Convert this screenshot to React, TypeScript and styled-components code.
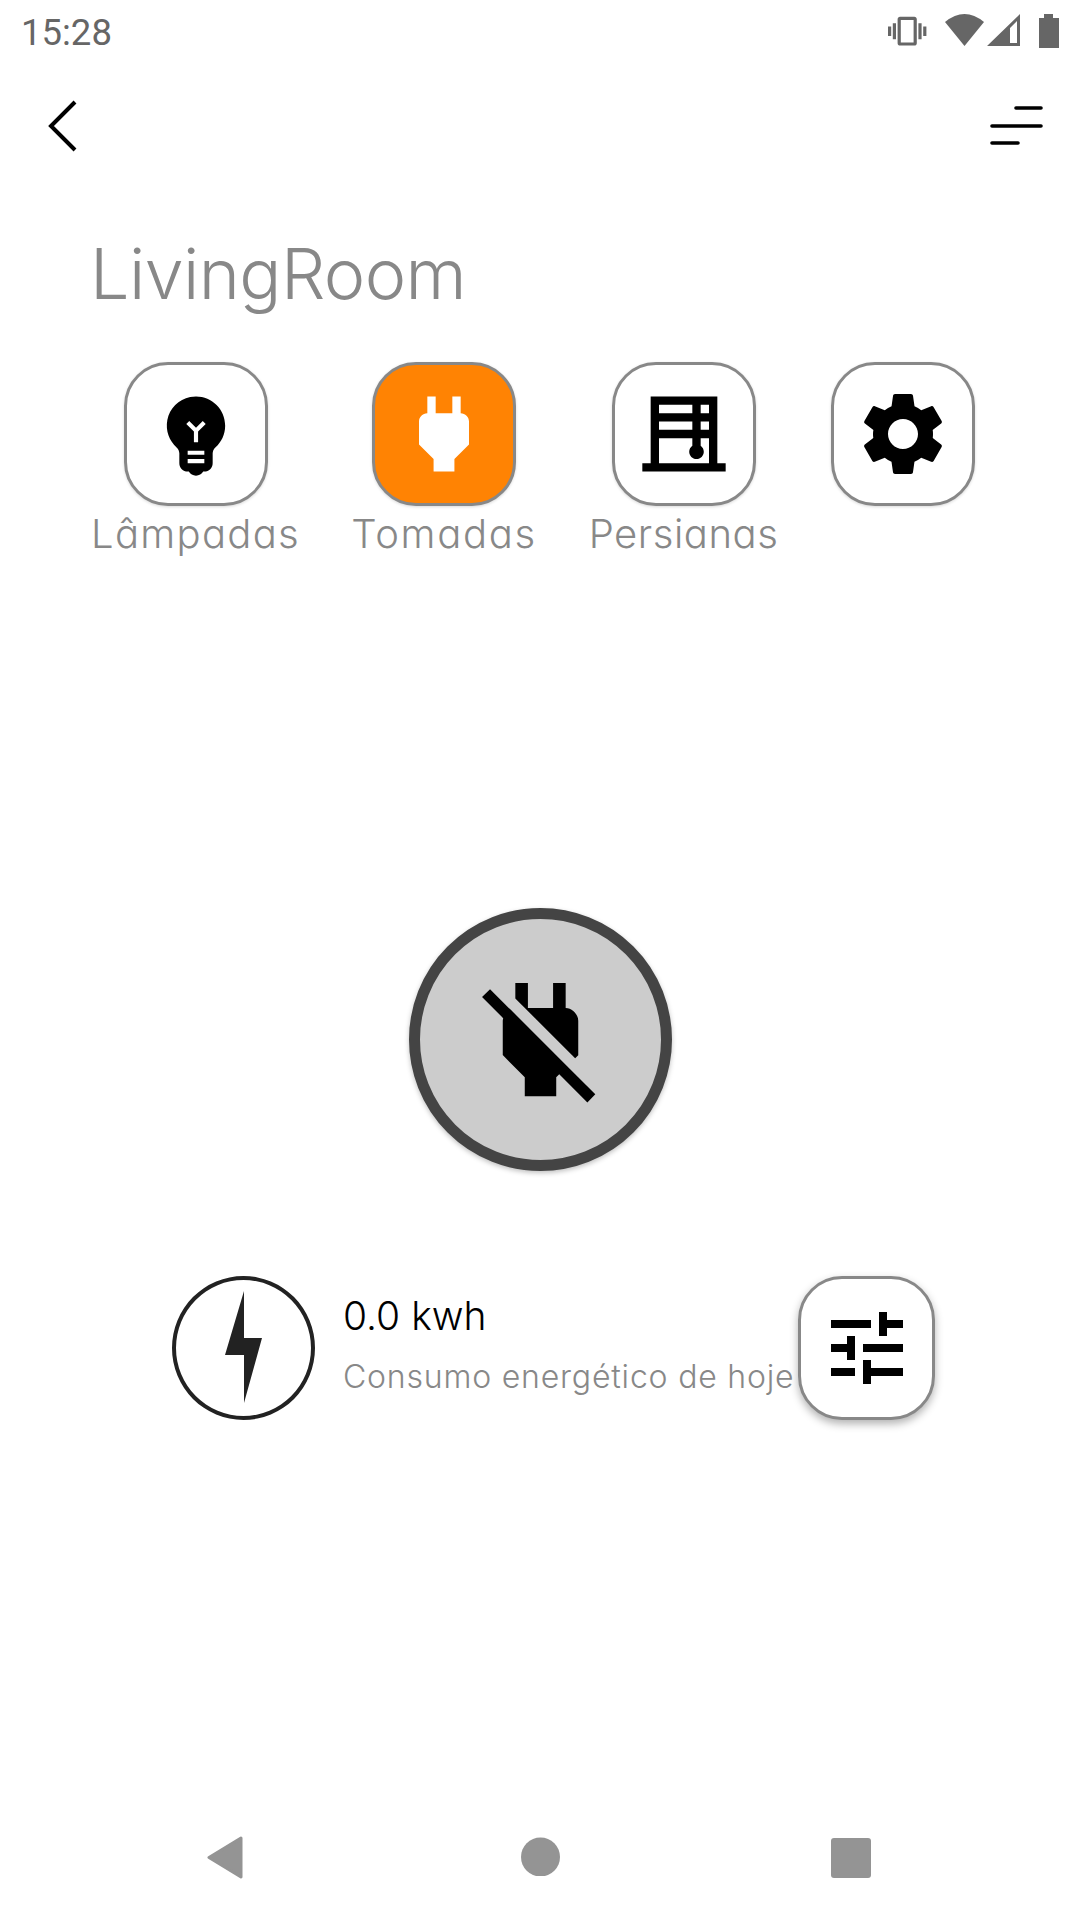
import styled, { createGlobalStyle } from "styled-components";

const GlobalStyle = createGlobalStyle`
  html, body {
    margin: 0;
    padding: 0;
    background: #fff;
  }
`;

const Screen = styled.div`
  width: 1080px;
  height: 1920px;
  display: flex;
  flex-direction: column;
  background: #fff;
  font-family: Inter, "Liberation Sans", sans-serif;
  font-feature-settings: "cv11" 1;
  overflow: hidden;
`;

const StatusBar = styled.div`
  height: 66px;
  padding: 14px 20px 0 21px;
  box-sizing: border-box;
  display: flex;
  justify-content: space-between;
  align-items: flex-start;
`;

const Clock = styled.span`
  font-family: Roboto, sans-serif;
  font-feature-settings: normal;
  font-size: 36.5px;
  line-height: 38px;
  color: #666;
`;

const StatusIcons = styled.div`
  display: flex;
  align-items: flex-start;
  fill: #666;
`;

const Toolbar = styled.div`
  height: 120px;
  padding: 0 36px 0 48px;
  box-sizing: border-box;
  display: flex;
  justify-content: space-between;
  align-items: center;
`;

const Title = styled.h1`
  margin: 43px 0 0 90px;
  font-size: 70px;
  line-height: 90px;
  font-weight: 300;
  letter-spacing: -0.6px;
  color: #888;
`;

const Tabs = styled.div`
  margin: 43px 0 0 93px;
  display: flex;
  gap: 54px;
`;

const Tab = styled.div<{ $width: number }>`
  width: ${(p) => p.$width}px;
  display: flex;
  flex-direction: column;
  align-items: center;
`;

const Tile = styled.div<{ $active?: boolean; $wide?: number; $shadow?: boolean }>`
  width: ${(p) => p.$wide ?? 144}px;
  height: 144px;
  box-sizing: border-box;
  flex: none;
  display: flex;
  align-items: center;
  justify-content: center;
  border: 3px solid #888;
  border-radius: 44px;
  background: ${(p) => (p.$active ? "#ff8303" : "#fff")};
  fill: ${(p) => (p.$active ? "#fff" : "#000")};
  box-shadow: ${(p) =>
    p.$shadow ? "0 4px 8px rgba(0,0,0,0.3)" : "0 1px 3px rgba(0,0,0,0.15)"};
`;

const TabLabel = styled.span<{ $tracking: number }>`
  margin-top: 3px;
  font-size: 40px;
  line-height: 50px;
  font-weight: 300;
  letter-spacing: ${(p) => p.$tracking}px;
  white-space: nowrap;
  color: #888;
`;

const PowerButton = styled.div`
  width: 263px;
  height: 263px;
  margin: 349px 0 0 409px;
  box-sizing: border-box;
  display: flex;
  align-items: center;
  justify-content: center;
  border: 11px solid #444;
  border-radius: 50%;
  background: #ccc;
  box-shadow: 0 2px 5px rgba(0,0,0,0.25);
`;

const Consumption = styled.div`
  margin: 105px 0 0 172px;
  width: 763px;
  display: flex;
  align-items: center;
`;

const BoltBadge = styled.div`
  width: 143px;
  height: 144px;
  flex: none;
  margin-right: 28px;
  padding-bottom: 3px;
  box-sizing: border-box;
  display: flex;
  align-items: center;
  justify-content: center;
  border: 4px solid #222;
  border-radius: 50%;
`;

const Reading = styled.div`
  width: 455px;
  flex: none;
  padding-bottom: 9px;
  display: flex;
  flex-direction: column;
`;

const Value = styled.span`
  font-size: 39px;
  line-height: 50px;
  font-weight: 300;
  color: #000;
`;

const Caption = styled.span`
  margin-top: 16px;
  font-size: 32px;
  line-height: 40px;
  font-weight: 300;
  letter-spacing: 0.8px;
  white-space: nowrap;
  color: #888;
`;

const NavBar = styled.div`
  margin-top: auto;
  height: 84px;
  padding-left: 206px;
  display: flex;
  align-items: flex-start;
  fill: #949494;
`;

const NavSlot = styled.div<{ $after: number }>`
  display: flex;
  margin-right: ${(p) => p.$after}px;
`;

const MdIcon = ({ d, size }: { d: string; size: number }) => (
  <svg width={size} height={size} viewBox="0 0 24 24">
    <path d={d} />
  </svg>
);

const bulb =
  "M12,3c-0.46,0-0.93,0.04-1.4,0.14C7.84,3.67,5.64,5.9,5.12,8.66c-0.48,2.61,0.48,5.01,2.22,6.56C7.77,15.6,8,16.13,8,16.69V19c0,1.1,0.9,2,2,2h0.28c0.35,0.6,0.98,1,1.72,1s1.38-0.4,1.72-1H14c1.1,0,2-0.9,2-2v-2.31c0-0.55,0.22-1.09,0.64-1.46C18.09,13.95,19,12.08,19,10C19,6.13,15.87,3,12,3z M14,19h-4v-1h4V19z M14,17h-4v-1h4V17z M12.5,11.41V14h-1v-2.59L9.67,9.59l0.71-0.71L12,10.5l1.62-1.62l0.71,0.71L12.5,11.41z";
const plug =
  "M16 7V3h-2v4h-4V3H8v4h-.01C6.9 6.99 6 7.89 6 8.98v5.52L9.5 18v3h5v-3l3.5-3.5V9c0-1.1-.9-2-2-2z";
const plugOff =
  "M18 14.49V9c0-1-1.01-2.01-2-2V3h-2v4h-4V3H8v2.48l9.51 9.5.49-.49zm-1.76 1.77L7.2 7.2l-.01.01L3.98 4 2.71 5.25l3.36 3.36C6.04 8.74 6 8.87 6 9v5.48L9.5 18v3h5v-3l.48-.48L19.45 22l1.26-1.28-4.47-4.46z";
const blinds =
  "M20,19V3H4v16H2v2h20v-2H20z M16,9h2v2h-2V9z M14,11H6V9h8V11z M18,7h-2V5h2V7z M14,5v2H6V5H14z M6,19v-6h8v1.82c-0.45,0.32-0.75,0.84-0.75,1.43c0,0.97,0.78,1.75,1.75,1.75s1.75-0.78,1.75-1.75c0-0.59-0.3-1.12-0.75-1.43V13h2v6H6z";
const gear =
  "M19.14,12.94c0.04-0.3,0.06-0.61,0.06-0.94c0-0.32-0.02-0.64-0.07-0.94l2.03-1.58c0.18-0.14,0.23-0.41,0.12-0.61l-1.92-3.32c-0.12-0.22-0.37-0.29-0.59-0.22l-2.39,0.96c-0.5-0.38-1.03-0.7-1.62-0.94L14.4,2.81c-0.04-0.24-0.24-0.41-0.48-0.41h-3.84c-0.24,0-0.43,0.17-0.47,0.41L9.25,5.35C8.66,5.59,8.12,5.92,7.63,6.29L5.24,5.33c-0.22-0.08-0.47,0-0.59,0.22L2.74,8.87C2.62,9.08,2.66,9.34,2.86,9.48l2.03,1.58C4.84,11.36,4.8,11.69,4.8,12s0.02,0.64,0.07,0.94l-2.03,1.58c-0.18,0.14-0.23,0.41-0.12,0.61l1.92,3.32c0.12,0.22,0.37,0.29,0.59,0.22l2.39-0.96c0.5,0.38,1.03,0.7,1.62,0.94l0.36,2.54c0.05,0.24,0.24,0.41,0.48,0.41h3.84c0.24,0,0.44-0.17,0.47-0.41l0.36-2.54c0.59-0.24,1.13-0.56,1.62-0.94l2.39,0.96c0.22,0.08,0.47,0,0.59-0.22l1.92-3.32c0.12-0.22,0.07-0.47-0.12-0.61L19.14,12.94z M12,15.6c-1.98,0-3.6-1.62-3.6-3.6s1.62-3.6,3.6-3.6s3.6,1.62,3.6,3.6S13.98,15.6,12,15.6z";
const tune =
  "M3 17v2h6v-2H3zM3 5v2h10V5H3zm10 16v-2h8v-2h-8v-2h-2v6h2zM7 9v2H3v2h4v2h2V9H7zm14 4v-2H11v2h10zm-6-4h2V7h4V5h-4V3h-2v6z";
const vibrate =
  "M0 15h2V9H0v6zm3 2h2V7H3v10zm19-8v6h2V9h-2zm-3 8h2V7h-2v10zM16.5 3h-9C6.67 3 6 3.67 6 4.5v15c0 .83.67 1.5 1.5 1.5h9c.83 0 1.5-.67 1.5-1.5v-15c0-.83-.67-1.5-1.5-1.5zM16 19H8V5h8v14z";

const tabs = [
  { label: "Lâmpadas", width: 205, tracking: 1.3, icon: bulb },
  { label: "Tomadas", width: 184, tracking: 1.7, icon: plug, active: true },
  { label: "Persianas", width: 187, tracking: 0.55, icon: blinds },
  { width: 144, icon: gear },
];

export default function App() {
  return (
    <Screen>
      <GlobalStyle />
      <StatusBar>
        <Clock>15:28</Clock>
        <StatusIcons>
          <svg width="172" height="36" viewBox="0 0 172 36">
            <g transform="translate(0,-2) scale(1.6)">
              <path d={vibrate} />
            </g>
            <path d="M57 8 Q76.5 -8 96 8 L76.5 32 Z" />
            <path
              fillRule="evenodd"
              d="M99 32 L132 0 V32 Z M122 14 V29 H129 V7 Z"
            />
            <path d="M156 0 H165 V4 H171 V34 H151 V4 H156 Z" />
          </svg>
        </StatusIcons>
      </StatusBar>

      <Toolbar>
        <svg width="30" height="54" viewBox="0 0 30 54">
          <path d="M27 3 L3 27 L27 51" fill="none" stroke="#000" strokeWidth="4" />
        </svg>
        <svg width="56" height="40" viewBox="0 0 56 40" stroke="#000" strokeWidth="3.6">
          <path d="M28 2 H53 M4 20 H53 M4 37 H30" strokeLinecap="round" />
        </svg>
      </Toolbar>

      <Title>LivingRoom</Title>

      <Tabs>
        {tabs.map((tab) => (
          <Tab key={tab.icon} $width={tab.width}>
            <Tile $active={tab.active}>
              <MdIcon d={tab.icon} size={100} />
            </Tile>
            {tab.label && <TabLabel $tracking={tab.tracking}>{tab.label}</TabLabel>}
          </Tab>
        ))}
      </Tabs>

      <PowerButton>
        <MdIcon d={plugOff} size={151} />
      </PowerButton>

      <Consumption>
        <BoltBadge>
          <svg width="38" height="112" viewBox="0 0 38 112" fill="#222">
            <path d="M19 0 V47 H37 L19 112 V64 H0 Z" />
          </svg>
        </BoltBadge>
        <Reading>
          <Value>0.0 kwh</Value>
          <Caption>Consumo energético de hoje</Caption>
        </Reading>
        <Tile $wide={137} $shadow>
          <MdIcon d={tune} size={96} />
        </Tile>
      </Consumption>

      <NavBar>
        <NavSlot $after={277}>
          <svg width="38" height="43" viewBox="0 0 38 43">
            <path
              d="M35 2 L3 21.5 L35 41 Z"
              stroke="#949494"
              strokeWidth="3"
              strokeLinejoin="round"
            />
          </svg>
        </NavSlot>
        <NavSlot $after={271}>
          <svg width="39" height="40" viewBox="0 0 39 40">
            <circle cx="19.5" cy="21" r="19.5" />
          </svg>
        </NavSlot>
        <NavSlot $after={0}>
          <svg width="40" height="42" viewBox="0 0 40 42">
            <rect x="0" y="2" width="40" height="40" rx="3" />
          </svg>
        </NavSlot>
      </NavBar>
    </Screen>
  );
}
